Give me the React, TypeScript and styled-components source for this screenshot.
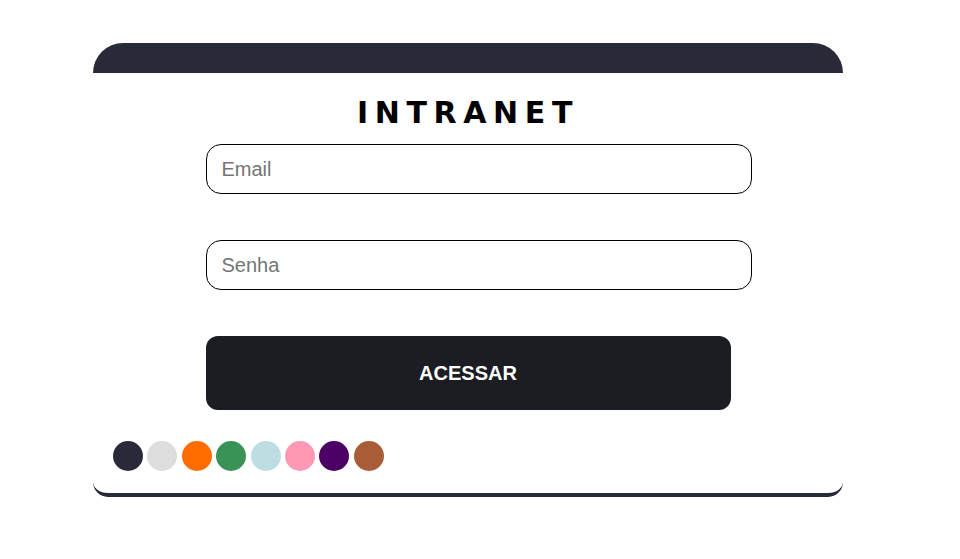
import React from "react";
import styled, { createGlobalStyle } from "styled-components";

const GlobalStyle = createGlobalStyle`
  html, body { margin: 0; padding: 0; background: #ffffff; }
  body { font-family: "Liberation Sans", Arial, sans-serif; }
`;

const Page = styled.div`
  padding: 43px 0 0 93px;
`;

const Card = styled.div`
  width: 750px;
  box-sizing: border-box;
  background: #ffffff;
  border-top: 30px solid #282a37;
  border-bottom: 4px solid #282a37;
  border-radius: 30px 30px 15px 15px;
  padding: 22px 0 22px;
`;

const Title = styled.h1`
  margin: 0;
  text-align: center;
  font-family: "DejaVu Sans", Verdana, sans-serif;
  font-weight: bold;
  font-size: 30px;
  line-height: 35px;
  letter-spacing: 6.6px;
  color: #000000;
`;

const Form = styled.form`
  width: 525px;
  margin: 14px auto 0;
  display: flex;
  flex-direction: column;
  align-items: flex-start;
  gap: 46px;
`;

const Input = styled.input`
  box-sizing: border-box;
  width: 546px;
  height: 50px;
  padding: 0 15px;
  border: 1px solid #000000;
  border-radius: 15px;
  font-family: "Liberation Sans", Arial, sans-serif;
  font-size: 20px;
  color: #000;
  background: #fff;
  outline: none;
  &::placeholder { color: #757575; }
`;

const Button = styled.button`
  height: 74px;
  width: 100%;
  border: none;
  border-radius: 12px;
  background: #1b1d23;
  color: #ffffff;
  font-family: "Liberation Sans", Arial, sans-serif;
  font-weight: bold;
  font-size: 20px;
  cursor: pointer;
`;

const Swatches = styled.div`
  display: flex;
  gap: 4.4px;
  padding-left: 20px;
  margin-top: 31px;
`;

const Dot = styled.span<{ $color: string }>`
  width: 30px;
  height: 30px;
  border-radius: 50%;
  background: ${(p) => p.$color};
  cursor: pointer;
`;

const colors = ["#282a38", "#dddddd", "#ff6c00", "#3a9356", "#bedde3", "#ff99b3", "#4d0063", "#a85c37"];

export default function App() {
  return (
    <>
      <GlobalStyle />
      <Page>
        <Card>
          <Title>INTRANET</Title>
          <Form onSubmit={(e) => e.preventDefault()}>
            <Input type="email" placeholder="Email" />
            <Input type="password" placeholder="Senha" />
            <Button type="submit">ACESSAR</Button>
          </Form>
          <Swatches>
            {colors.map((c) => (
              <Dot key={c} $color={c} />
            ))}
          </Swatches>
        </Card>
      </Page>
    </>
  );
}
